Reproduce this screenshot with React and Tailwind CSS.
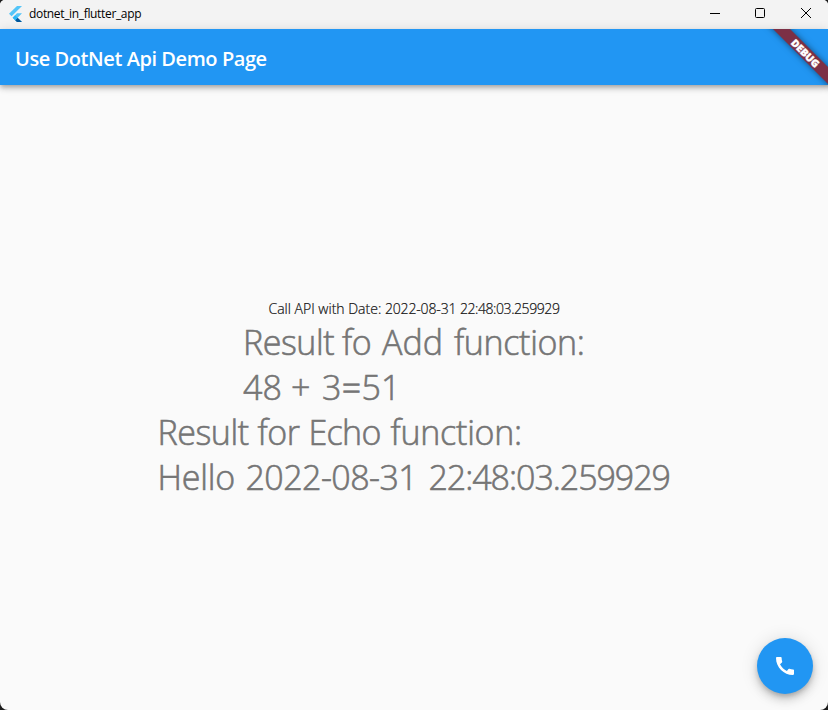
function FlutterLogo() {
  return (
    <svg width="13" height="16" viewBox="0 0 13 16" className="mb-px block">
      <path d="M8 0H13L2.6 10.2L0 7.8Z" fill="#54c5f8" />
      <path d="M8 7.3H13L8.6 11.7L13 16H8L3.6 11.7Z" fill="#54c5f8" />
      <path d="M6.1 14.2L8.6 11.7L13 16H8Z" fill="#01579b" />
      <path d="M3.6 11.7L6.1 9.2L8.6 11.7L6.1 14.2Z" fill="#29b6f6" />
    </svg>
  );
}

function TitleBar() {
  return (
    <header className="flex h-[29px] shrink-0 items-center bg-[#f3f3f3] pl-[9px] text-black">
      <FlutterLogo />
      <span className="ml-[7px] flex-1 whitespace-nowrap pb-px text-[12px] leading-4 tracking-[-0.34px]">dotnet_in_flutter_app</span>
      <div className="flex h-full items-center pb-[3px]">
        <div className="flex w-[45px] justify-center">
          <svg width="10" height="10" viewBox="0 0 10 10"><path d="M0 5.5H10" stroke="#000" /></svg>
        </div>
        <div className="flex w-[45px] justify-center">
          <svg width="10" height="10" viewBox="0 0 10 10"><rect x=".5" y=".5" width="9" height="9" rx="1" fill="none" stroke="#000" /></svg>
        </div>
        <div className="flex w-[46px] justify-center pl-[2px]">
          <svg width="10" height="10" viewBox="0 0 10 10"><path d="M0 0L10 10M10 0L0 10" stroke="#000" /></svg>
        </div>
      </div>
    </header>
  );
}

function DebugBanner() {
  return (
    <div className="pointer-events-none absolute right-0 top-0 h-[80px] w-[80px] overflow-hidden">
      <div className="absolute left-[-3px] top-[17.5px] flex h-[12px] w-[121px] rotate-45 items-center justify-center bg-[#7c3046] shadow-[0_0_6px_rgba(0,0,0,0.5)]">
        <span className="text-[10.2px] font-black leading-none text-white [-webkit-text-stroke:0.4px_white]">DEBUG</span>
      </div>
    </div>
  );
}

export default function App() {
  return (
    <div className="bg-[#1c1c1c]">
      <div className="relative flex h-[710px] w-[828px] flex-col overflow-hidden rounded-t-[5px] rounded-b-[8px] bg-[#fafafa] font-['Open_Sans','Noto_Sans',sans-serif]">
        <TitleBar />
        <div className="relative flex min-h-0 flex-1 flex-col">
          <div className="z-10 flex h-14 shrink-0 items-center bg-[#2196f3] pl-[15px] pt-1 shadow-[0_2px_4px_-1px_rgba(0,0,0,0.2),0_4px_5px_rgba(0,0,0,0.14),0_1px_10px_rgba(0,0,0,0.12)]">
            <h1 className="whitespace-nowrap text-[20px] font-semibold leading-7 tracking-[-0.43px] text-white">Use DotNet Api Demo Page</h1>
          </div>
          <main className="flex flex-1 flex-col items-center whitespace-nowrap pt-[214px]">
            <p className="mb-px text-[14px] font-light leading-[20px] text-[#111] [-webkit-text-stroke:0.2px_#111]">
              Call API with Date: <span className="inline-block w-[75px] tracking-[-0.15px]">2022-08-31 </span>
              <span className="tracking-[-0.42px]">22:48:03.259929</span>
            </p>
            <div className="w-[342px] text-[34px] font-light leading-[45px] text-[#757575] [-webkit-text-stroke:0.6px_#757575]">
              <p className="tracking-[-0.45px]">
                <span className="inline-block w-[99px]">Result </span>
                <span className="inline-block w-[40px]">fo </span>
                <span className="inline-block w-[72px] tracking-normal">Add </span>
                <span className="tracking-[-0.35px]">function:</span>
              </p>
              <p>
                <span className="inline-block w-[48px]">48 </span>
                <span className="inline-block w-[31px]">+ </span>
                <span className="tracking-[0.3px]">3=51</span>
              </p>
            </div>
            <div className="w-[513px] text-[34px] font-light leading-[45px] text-[#757575] [-webkit-text-stroke:0.6px_#757575]">
              <p className="tracking-[-0.45px]">
                <span className="inline-block w-[100px]">Result </span>
                <span className="inline-block w-[51px]">for </span>
                <span className="inline-block w-[82px] tracking-[-0.7px]">Echo </span>
                <span className="tracking-[-0.25px]">function:</span>
              </p>
              <p>
                <span className="inline-block w-[88px] tracking-[-0.2px]">Hello </span>
                <span className="inline-block w-[183px] tracking-[-0.55px]">2022-08-31 </span>
                <span className="tracking-[-1.05px]">22:48:03.259929</span>
              </p>
            </div>
          </main>
          <div className="pointer-events-none absolute inset-0 z-20"><DebugBanner /></div>
          <button className="absolute bottom-4 right-[15px] flex h-14 w-14 items-center justify-center rounded-full bg-[#2196f3] shadow-[0_3px_5px_-1px_rgba(0,0,0,0.2),0_6px_10px_rgba(0,0,0,0.14),0_1px_18px_rgba(0,0,0,0.12)]">
            <svg width="24" height="24" viewBox="0 0 24 24" fill="#fff"><path d="M20.01 15.38c-1.23 0-2.42-.2-3.53-.56a.977.977 0 0 0-1.01.24l-1.57 1.97c-2.83-1.35-5.48-3.9-6.89-6.83l1.95-1.66c.27-.28.35-.67.24-1.02-.37-1.11-.56-2.3-.56-3.53 0-.54-.45-.99-.99-.99H4.19C3.65 3 3 3.24 3 3.99 3 13.28 10.73 21 20.01 21c.71 0 .99-.63.99-1.18v-3.45c0-.54-.45-.99-.99-.99z" /></svg>
          </button>
        </div>
      </div>
    </div>
  );
}
